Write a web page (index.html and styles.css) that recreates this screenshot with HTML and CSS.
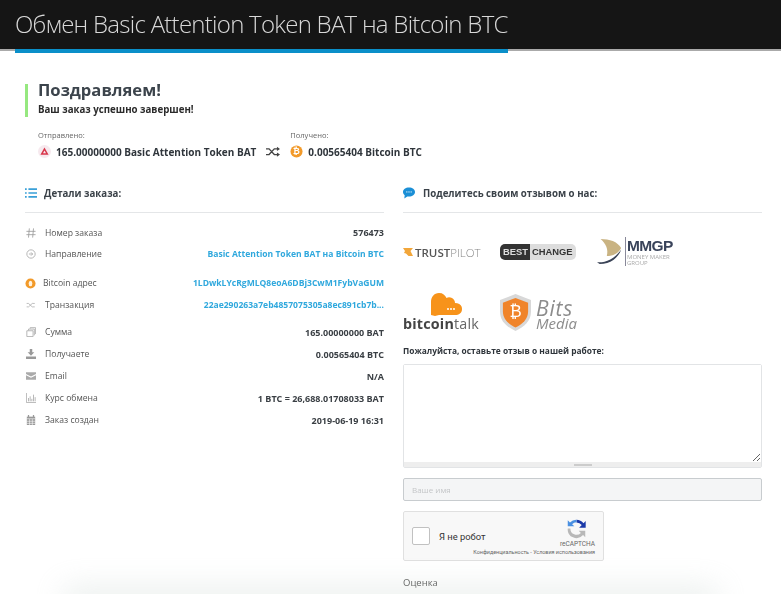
FILE: index.html
```html
<!DOCTYPE html>
<html lang="ru">
<head>
<meta charset="UTF-8">
<meta name="viewport" content="width=device-width, initial-scale=1.0">
<title>Обмен Basic Attention Token BAT на Bitcoin BTC</title>
<link rel="stylesheet" href="styles.css">
</head>
<body>
<header class="top">
    <h1 class="top-title">Обмен Basic Attention Token BAT на Bitcoin BTC</h1>
</header>
<div class="content">
    <div class="congrats">
        <h2>Поздравляем!</h2>
        <p>Ваш заказ успешно завершен!</p>
    </div>
    <div class="swap">
        <div class="swap-side">
            <div class="swap-label">Отправлено:</div>
            <div class="swap-value">
                <svg class="coin" viewBox="0 0 14 14"><circle cx="7" cy="7" r="7" fill="#f6e9ee"/><path d="M7 2.800 11.400 10.600H2.600Z" fill="#d8354a"/><path d="M7 6 8.600 9H5.400Z" fill="#f6e9ee"/></svg>
                <span>165.00000000 Basic Attention Token BAT</span>
            </div>
        </div>
        <svg class="swap-arrows" viewBox="0 0 16 12"><path d="M0 3h3.500l6 6.500H14M0 9.500h3.500l6-6.500H14" fill="none" stroke="#444" stroke-width="1.500"/><path d="M12.500.5 16 3l-3.500 2.500zM12.500 7 16 9.500 12.500 12z" fill="#444"/></svg>
        <div class="swap-side">
            <div class="swap-label">Получено:</div>
            <div class="swap-value">
                <svg class="coin" viewBox="0 0 14 14"><circle cx="7" cy="7" r="6.500" fill="#f29a2a"/><text x="7" y="10" class="coin-b">₿</text></svg>
                <span>0.00565404 Bitcoin BTC</span>
            </div>
        </div>
    </div>
    <div class="cols">
        <section class="details">
            <div class="col-head">
                <svg class="head-icon" viewBox="0 0 14 12"><path d="M0 1.500h2M4 1.500h10M0 6h2M4 6h10M0 10.500h2M4 10.500h10" stroke="#3aa0d8" stroke-width="1.800"/></svg>
                <span>Детали заказа:</span>
            </div>
            <div class="rows">
                <div class="group">
                    <div class="row">
                        <span class="row-name"><svg class="ico" viewBox="0 0 12 12"><path d="M4 .5 3 11.500M9 .5 8 11.500M.5 4h11M.5 8h11" fill="none" stroke="#9a9a9a" stroke-width="1"/></svg>Номер заказа</span>
                        <b>576473</b>
                    </div>
                    <div class="row">
                        <span class="row-name"><svg class="ico" viewBox="0 0 12 12"><circle cx="6" cy="6" r="5" fill="none" stroke="#aaa"/><path d="M3.500 6h4.500M6 4l2 2-2 2" fill="none" stroke="#aaa"/></svg>Направление</span>
                        <b class="blue">Basic Attention Token BAT на Bitcoin BTC</b>
                    </div>
                </div>
                <div class="group">
                    <div class="row">
                        <span class="row-name row-name-tight"><svg class="ico ico-coin" viewBox="0 0 12 12"><circle cx="6" cy="6" r="5.500" fill="#f29a2a"/><ellipse cx="6" cy="6" rx="2" ry="3" fill="#fff3e0"/></svg>Bitcoin адрес</span>
                        <b class="blue">1LDwkLYcRgMLQ8eoA6DBj3CwM1FybVaGUM</b>
                    </div>
                    <div class="row">
                        <span class="row-name"><svg class="ico" viewBox="0 0 16 12"><path d="M1 3.500h3l6 5.500h4M1 9h3l6-5.500h4" fill="none" stroke="#aaa" stroke-width="1.200"/></svg>Транзакция</span>
                        <b class="blue">22ae290263a7eb4857075305a8ec891cb7b...</b>
                    </div>
                </div>
                <div class="group">
                    <div class="row">
                        <span class="row-name"><svg class="ico" viewBox="0 0 12 12"><path d="M1 4.500h7.500v7H1zM3 4V2.500h7V10M5 2V.8h6.500v7.700" fill="none" stroke="#aaa"/></svg>Сумма</span>
                        <b>165.00000000 BAT</b>
                    </div>
                    <div class="row">
                        <span class="row-name"><svg class="ico" viewBox="0 0 12 12"><path d="M4.500 0h3v4h2.500L6 8 2 4h2.500zM0 9h12v3H0z" fill="#999"/></svg>Получаете</span>
                        <b>0.00565404 BTC</b>
                    </div>
                    <div class="row">
                        <span class="row-name"><svg class="ico" viewBox="0 0 12 12"><path d="M0 1.500h12v2L6 6.500 0 3.500zM0 5l6 3 6-3v5.500H0z" fill="#aaa"/></svg>Email</span>
                        <b>N/A</b>
                    </div>
                    <div class="row">
                        <span class="row-name"><svg class="ico" viewBox="0 0 12 12"><path d="M.5 0v11.500H12M3 10V6M5 10V4M7 10V7M9 10V2M11 10V5" fill="none" stroke="#aaa"/></svg>Курс обмена</span>
                        <b>1 BTC = 26,688.01708033 BAT</b>
                    </div>
                    <div class="row">
                        <span class="row-name"><svg class="ico" viewBox="0 0 12 12"><path d="M1 2h10v10H1z" fill="#999"/><path d="M3 0v3M9 0v3" stroke="#999" stroke-width="1.500"/><path d="M1 4.500h10M1 7.500h10M1 10h10M4.300 5v7M7.600 5v7" stroke="#fff" stroke-width=".7"/></svg>Заказ создан</span>
                        <b>2019-06-19 16:31</b>
                    </div>
                </div>
            </div>
        </section>
        <section class="review">
            <div class="col-head col-head-wide">
                <svg class="head-icon" viewBox="0 0 14 13"><path d="M7 0C3 0 0 2.300 0 5.300c0 1.500.8 2.900 2 3.800L1.500 13l3.500-2.500c.6.100 1.300.2 2 .2 4 0 7-2.400 7-5.400S11 0 7 0z" fill="#1b8fd6"/><circle cx="4.500" cy="5.300" r=".7" fill="#fff"/><circle cx="7" cy="5.300" r=".7" fill="#fff"/><circle cx="9.500" cy="5.300" r=".7" fill="#fff"/></svg>
                <span>Поделитесь своим отзывом о нас:</span>
            </div>
            <div class="logos">
                <div class="logo-trust"><svg class="trust-star" viewBox="0 0 10 8"><path d="M0 0h10L7.500 3 10 8H5.500L3 5.500 1 5l1-2z" fill="#f2a63a"/></svg><span>TRUST<i>PILOT</i></span></div>
                <div class="logo-best"><span class="best-a">BEST</span><span class="best-b">CHANGE</span></div>
                <div class="logo-mmgp">
                    <svg class="mmgp-mark" viewBox="0 0 28 28"><path d="M4 0C14 0 23 3 27 10c-3 6-9 9-16 9C13 12 10 5 4 0z" fill="#c9b382"/><path d="M0 26c8 1 19-3 27-14-3 9-12 16-24 16z" fill="#3a4356"/></svg>
                    <div class="mmgp-text"><strong>MMGP</strong><span>MONEY MAKER<br>GROUP</span></div>
                </div>
                <div class="logo-btalk">
                    <svg class="btalk-cloud" viewBox="0 0 31 23"><path d="M0 22V9c0-5 3-9 8-9 4 0 6 2 7.500 5C17 4 19 4 21 5c2 1 3 3 3 5 4 0 7 2 7 6s-3 6-7 6H8l-4 1z" fill="#f7931a"/><circle cx="17" cy="16" r="1" fill="#fff"/><circle cx="20" cy="16" r="1" fill="#fff"/><circle cx="23" cy="16" r="1" fill="#fff"/></svg>
                    <div class="btalk-text"><b>bitcoin</b>talk</div>
                </div>
                <div class="logo-bits">
                    <svg class="bits-shield" viewBox="0 0 32 38"><path d="M16 0 32 6v12c0 10-7 16-16 20C7 34 0 28 0 18V6z" fill="#d8d8d8"/><path d="M16 4 29 9v9c0 8-6 13-13 16.500C9 31 3 26 3 18V9z" fill="#f0842a"/><text x="16" y="24" class="shield-b">₿</text></svg>
                    <div class="bits-text"><span class="bits-big">Bits</span><span>Media</span></div>
                </div>
            </div>
            <label class="review-label" for="review">Пожалуйста, оставьте отзыв о нашей работе:</label>
            <div class="review-box">
                <textarea id="review" class="review-area"></textarea>
                <div class="review-grip"><span></span></div>
            </div>
            <input class="name-input" type="text" placeholder="Ваше имя">
            <div class="captcha">
                <span class="captcha-check"></span>
                <span class="captcha-text">Я не робот</span>
                <div class="captcha-brand">
                    <svg class="captcha-logo" viewBox="0 0 24 24"><path d="M12 2a10 10 0 0 1 8 4l2.500-2.500V11H15l3-3a7.500 7.500 0 0 0-6-3z" fill="#1c3aa9"/><path d="M12 2v3a7 7 0 0 0-5 2l2.500 2.500H2V2.500L4.500 5A10 10 0 0 1 12 2z" fill="#4a90e2"/><path d="M2 12h3a7 7 0 0 0 12 5l-2.500-2.500H22V22l-2.500-2.500A10 10 0 0 1 2 12z" fill="#b8b8b8"/></svg>
                    <span class="captcha-name">reCAPTCHA</span>
                    <span class="captcha-terms">Конфиденциальность - Условия использования</span>
                </div>
            </div>
            <div class="rating-label">Оценка</div>
        </section>
    </div>
</div>
<div class="bottom-fade"></div>
</body>
</html>
```

FILE: styles.css
```css
html, body {
    height: 594px;
    overflow: hidden;
}
body {
    margin: 0;
    font-family: "Open Sans", "Noto Sans", sans-serif;
    color: #333;
    background-color: #fff;
    position: relative;
}
.top {
    height: 49px;
    background-color: #151515;
    border-bottom: 2px solid #aaa;
    padding: 0 15px;
    filter: blur(0.4px);
}
.top-title {
    display: inline-block;
    margin: 0;
    height: 49px;
    line-height: 47px;
    font-size: 24px;
    font-weight: 300;
    letter-spacing: -0.73px;
    color: #d8d8d8;
    white-space: nowrap;
    box-shadow: 0 4px 0 #0a8fc9;
}
.content {
    padding: 33px 19px 0 25px;
    filter: blur(0.4px);
}
.congrats {
    display: flow-root;
    border-left: 3px solid #96e880;
    padding-left: 10px;
    height: 33px;
}
.congrats h2 {
    margin: -5px 0 0;
    font-size: 16.600px;
    line-height: 22px;
    font-weight: 700;
    color: #3c444c;
}
.congrats p {
    margin: 2px 0 0;
    font-size: 9.700px;
    line-height: 14px;
    font-weight: 700;
    color: #2b2b2b;
}
.swap {
    display: flex;
    align-items: flex-end;
    margin-top: 13px;
    padding-left: 13px;
}
.swap-label {
    font-size: 7.500px;
    line-height: 10px;
    color: #666;
}
.swap-value {
    display: flex;
    align-items: center;
    gap: 5px;
    margin-top: 4px;
    height: 15px;
    font-size: 10px;
    font-weight: 700;
    color: #2f353b;
    white-space: nowrap;
}
.coin {
    width: 13px;
    height: 13px;
}
.coin-b {
    font-family: "DejaVu Sans", sans-serif;
    font-size: 9px;
    text-anchor: middle;
    fill: #fff;
}
.swap-arrows {
    width: 14px;
    height: 11px;
    margin: 0 10px 2px 10px;
}
.cols {
    display: grid;
    grid-template-columns: 359px 359px;
    column-gap: 19px;
    margin-top: 25px;
}
.col-head {
    display: flex;
    align-items: center;
    gap: 7px;
    height: 18px;
    padding-bottom: 10px;
    border-bottom: 1px solid #e4e6e8;
    font-size: 9.700px;
    font-weight: 700;
    color: #3b4249;
}
.col-head-wide {
    gap: 8px;
}
.head-icon {
    width: 12px;
    height: 12px;
}
.rows {
    margin-top: 9px;
}
.group + .group {
    margin-top: 7px;
}
.group:last-child {
    margin-top: 5px;
}
.row {
    display: flex;
    justify-content: space-between;
    align-items: center;
    height: 22px;
    font-size: 8.600px;
    color: #555;
}
.group:first-child .row {
    height: 21.500px;
}
.row b {
    font-size: 9px;
    font-weight: 700;
    color: #3a3f44;
    white-space: nowrap;
}
.row b.blue {
    font-size: 8.550px;
    color: #2fa8dd;
}
.row-name {
    display: flex;
    align-items: center;
    gap: 9px;
    padding-left: 1px;
}
.row-name-tight {
    gap: 7px;
    padding-left: 0;
}
.ico {
    width: 10px;
    height: 10px;
}
.ico-coin {
    width: 11px;
    height: 11px;
}
.logos {
    display: grid;
    grid-template-columns: 97px 97px 100px;
    grid-template-rows: 60px 60px;
    align-items: center;
    margin-top: 9px;
}
.logo-trust {
    display: flex;
    align-items: center;
    gap: 2px;
    font-size: 11.500px;
    color: #555;
    font-weight: 600;
}
.trust-star {
    width: 10px;
    height: 8px;
}
.logo-trust i {
    font-style: normal;
    font-weight: 300;
    color: #888;
}
.logo-best {
    display: inline-flex;
    width: 76px;
    height: 16px;
    font-family: "Liberation Sans", sans-serif;
    font-size: 9.400px;
    font-weight: 700;
    line-height: 16px;
}
.best-a {
    width: 30px;
    box-sizing: border-box;
    background-color: #333;
    color: #ddd;
    padding-left: 3px;
    border-radius: 5px 0 0 5px;
}
.best-b {
    flex: 1;
    background-color: #ddd;
    color: #333;
    padding-left: 2px;
    border-radius: 0 5px 5px 0;
    white-space: nowrap;
}
.logo-mmgp {
    display: flex;
    align-items: center;
    margin-top: -2px;
}
.mmgp-mark {
    width: 25px;
    height: 27px;
}
.mmgp-text {
    margin-left: 3px;
    padding-left: 1px;
    border-left: 1px solid #889;
    width: 50px;
}
.mmgp-text strong {
    display: block;
    font-family: "Liberation Sans", sans-serif;
    font-size: 15.500px;
    line-height: 17px;
    letter-spacing: -0.6px;
    color: #39435a;
}
.mmgp-text span {
    display: block;
    font-size: 6px;
    line-height: 6px;
    color: #aaa;
    white-space: nowrap;
}
.logo-btalk {
    height: 38px;
}
.btalk-cloud {
    display: block;
    width: 31px;
    height: 23px;
    margin-left: 28px;
}
.btalk-text {
    font-size: 14.300px;
    line-height: 16px;
    color: #666;
    letter-spacing: 0.2px;
    white-space: nowrap;
}
.btalk-text b {
    color: #444;
}
.logo-bits {
    display: flex;
    align-items: center;
    gap: 5px;
}
.bits-shield {
    width: 31px;
    height: 37px;
}
.bits-text {
    display: flex;
    flex-direction: column;
    margin-top: 4px;
    font-size: 15px;
    line-height: 13px;
    font-style: italic;
    color: #8c8c8c;
}
.bits-big {
    font-size: 21px;
    line-height: 18px;
    letter-spacing: 0.8px;
}
.shield-b {
    font-family: "DejaVu Sans", sans-serif;
    font-size: 17px;
    text-anchor: middle;
    fill: #fff;
}
.review-label {
    display: block;
    margin-top: 3px;
    font-size: 8.400px;
    line-height: 12px;
    font-weight: 700;
    color: #2f353b;
}
.review-box {
    margin-top: 7px;
    border: 1px solid #e2e4e6;
    border-radius: 2px;
}
.review-area {
    display: block;
    width: 100%;
    height: 97px;
    margin: 0;
    padding: 0;
    border: 0;
    box-sizing: border-box;
    background: #fff;
}
.review-grip {
    display: flex;
    justify-content: center;
    align-items: center;
    height: 5px;
    background-color: #eee;
}
.review-grip span {
    width: 18px;
    height: 2px;
    background-color: #ccc;
}
.name-input {
    display: block;
    width: 100%;
    height: 23px;
    margin-top: 10px;
    padding: 0 8px;
    box-sizing: border-box;
    border: 1px solid #c8cccf;
    border-radius: 2px;
    background-color: #f4f5f6;
    font-family: inherit;
    font-size: 8px;
}
.name-input::placeholder {
    color: #c4c6c8;
}
.captcha {
    display: flex;
    align-items: center;
    width: 201px;
    height: 50px;
    margin-top: 10px;
    padding: 0 8px;
    box-sizing: border-box;
    position: relative;
    border: 1px solid #e0e0e0;
    border-radius: 2px;
    background-color: #f8f8f8;
}
.captcha-check {
    width: 18px;
    height: 18px;
    box-sizing: border-box;
    border: 1px solid #c1c1c1;
    border-radius: 2px;
    background-color: #fff;
}
.captcha-text {
    margin-left: 9px;
    font-family: Roboto, sans-serif;
    font-size: 9.400px;
    color: #333;
}
.captcha-brand {
    position: absolute;
    top: 6px;
    right: 8px;
    display: flex;
    flex-direction: column;
    align-items: flex-end;
    font-family: Roboto, sans-serif;
    color: #666;
}
.captcha-logo {
    width: 21px;
    height: 21px;
    margin-right: 8px;
}
.captcha-name {
    font-size: 6.500px;
    line-height: 9px;
    margin-top: 1px;
}
.captcha-terms {
    font-size: 5.400px;
    line-height: 7px;
    white-space: nowrap;
}
.rating-label {
    margin-top: 15px;
    font-size: 9.500px;
    line-height: 13px;
    color: #555;
}
.bottom-fade {
    position: absolute;
    left: 70px;
    right: 70px;
    top: 594px;
    height: 10px;
    box-shadow: 0 0 30px 6px rgba(205, 215, 210, 0.45);
}
```
